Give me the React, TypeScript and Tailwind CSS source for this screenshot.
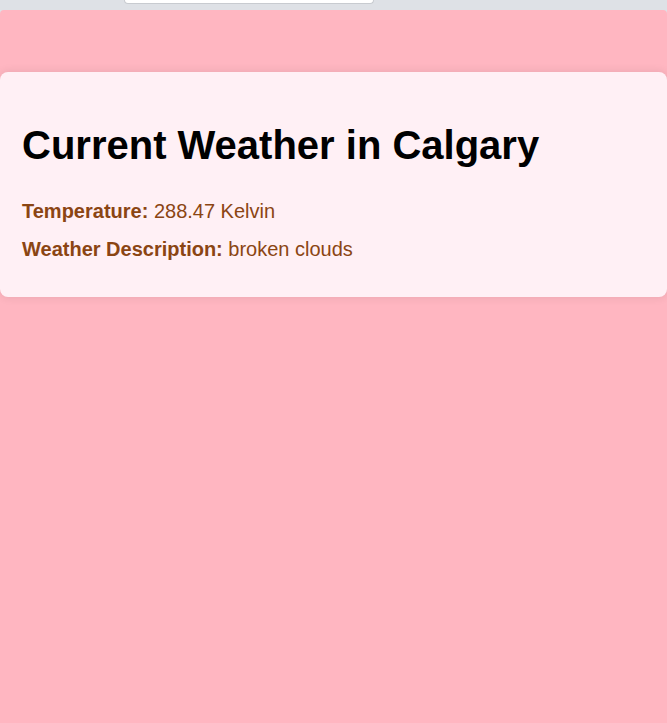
function App() {
  return (
    <div className="flex flex-col h-[723px] bg-[#dee1e6] font-['Liberation_Sans',Arial,sans-serif]">
      {/* browser strip */}
      <div className="h-[10px] shrink-0">
        <div className="ml-[124px] w-[250px] h-[4px] bg-white rounded-b-[10px] border border-t-0 border-[#c8cbd0]" />
      </div>

      {/* page */}
      <div className="flex-1 bg-[#ffb6c1] rounded-t-[4px] pt-[62px]">
        <div className="bg-[#fff0f5] rounded-lg shadow-[0_0_10px_rgba(0,0,0,0.1)] pl-[22px] pr-5 pt-[50px] pb-[36px]">
          <h1 className="text-[40px] font-bold text-black leading-[46px] mb-[32px]">
            Current Weather in Calgary
          </h1>
          <p className="text-[20px] text-[#8b4513] leading-[23px]">
            <strong>Temperature:</strong> 288.47 Kelvin
          </p>
          <p className="text-[20px] text-[#8b4513] leading-[23px] mt-[15px]">
            <strong>Weather Description:</strong> broken clouds
          </p>
        </div>
      </div>
    </div>
  );
}

export default App;
